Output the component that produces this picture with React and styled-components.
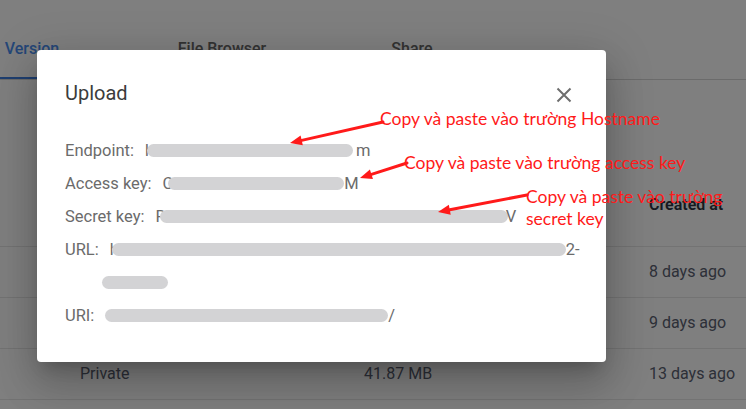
import React from 'react'
import styled, { createGlobalStyle } from 'styled-components'

const GlobalStyle = createGlobalStyle`
    html, body {
        margin: 0;
        padding: 0;
        background: #ffffff;
        font-family: Roboto, "Liberation Sans", sans-serif;
    }
    #root {
        position: relative;
        width: 746px;
        height: 409px;
        overflow: hidden;
    }
`

const Page = styled.div`
    width: 746px;
    height: 409px;
    background: #ffffff;
`

const TabBar = styled.div`
    display: flex;
    margin-left: -63px;
    padding-top: 38px;
    border-bottom: 1px solid #d6d6d6;
`

const Tab = styled.div`
    width: 190px;
    text-align: center;
    font-size: 16px;
    font-weight: 500;
    line-height: 22px;
    padding-bottom: 17px;
    color: ${props => props.active ? '#4a8ef0' : '#666666'};
    border-bottom: 2px solid ${props => props.active ? '#3f7fe0' : 'transparent'};
`

const Table = styled.div`
    margin-top: 114px;
`

const TableRow = styled.div`
    display: grid;
    grid-template-columns: 284px 285px auto;
    padding-left: 80px;
    height: ${props => props.header ? '52px' : '50px'};
    align-items: ${props => props.header ? 'start' : 'center'};
    border-bottom: 1px solid #e6e6e6;
    font-size: 16px;
    line-height: 22px;
    color: ${props => props.header ? '#2c3240' : '#5a6070'};
    font-weight: ${props => props.header ? 600 : 400};
`

const Backdrop = styled.div`
    position: absolute;
    inset: 0;
    background: rgba(0, 0, 0, 0.5);
`

const Dialog = styled.div`
    position: absolute;
    left: 37px;
    top: 50px;
    width: 569px;
    height: 312px;
    box-sizing: border-box;
    background: #ffffff;
    border-radius: 4px;
    padding: 31px 34px 0 28px;
    box-shadow: 0 11px 15px -7px rgba(0,0,0,0.2), 0 24px 38px 3px rgba(0,0,0,0.14), 0 9px 46px 8px rgba(0,0,0,0.12);
`

const DialogHeader = styled.div`
    display: flex;
    align-items: center;
    justify-content: space-between;
    height: 24px;
`

const Title = styled.h2`
    margin: 0;
    font-size: 20px;
    font-weight: 400;
    color: #3c3c3c;
    line-height: 24px;
`

const CloseButton = styled.div`
    width: 16px;
    height: 16px;
    margin-top: 4px;
    display: flex;
`

const Fields = styled.div`
    margin-top: 29px;
    font-size: 16.5px;
    line-height: 33px;
    color: #6b6b6b;
`

const Field = styled.div`
    display: flex;
`

const Label = styled.span`
    flex: none;
    margin-right: 11px;
`

const Value = styled.div`
    flex: 1;
    white-space: nowrap;
`

// blurred out part of a secret value
const Redact = styled.span`
    display: inline-block;
    vertical-align: middle;
    height: 13px;
    margin-top: -3px;
    margin-left: ${props => props.overlap || 0}px;
    margin-right: ${props => props.gap || 0}px;
    border-radius: 7px;
    background: #d3d3d5;
`

const Arrows = styled.svg`
    position: absolute;
    left: 0;
    top: 0;
    pointer-events: none;
`

const Note = styled.div`
    position: absolute;
    font-family: Lato, "Noto Sans", sans-serif;
    font-size: 17.5px;
    line-height: 22px;
    color: #ff1a1a;
    white-space: nowrap;
`

const fields = [
    { label: 'Endpoint:', head: 'h', width: 206, tail: 'm', overlap: -7, gap: 3 },
    { label: 'Access key:', head: 'C', width: 176, tail: 'M', overlap: -5, gap: 0 },
    { label: 'Secret key:', head: 'R', width: 348, tail: 'V', overlap: -6, gap: -2 },
    { label: 'URL:', head: 'h', width: 454, tail: '2-', overlap: -7, gap: 0, more: 66 },
    { label: 'URI:', head: '', width: 283, tail: '/', overlap: 0, gap: 0 },
]

const notes = [
    { left: 380, top: 108, text: 'Copy và paste vào trường Hostname' },
    { left: 404, top: 152, text: 'Copy và paste vào trường access key' },
    { left: 526, top: 186, text: 'Copy và paste vào trường' },
    { left: 526, top: 208, text: 'secret key' },
]

const arrows = [
    { x1: 383, y1: 122, x2: 290, y2: 143 },
    { x1: 407, y1: 163, x2: 360, y2: 178 },
    { x1: 527, y1: 195, x2: 438, y2: 212 },
]

function Arrow({ x1, y1, x2, y2 }) {
    const a = Math.atan2(y2 - y1, x2 - x1)
    const len = 12
    const w = 5
    const bx = x2 - len * Math.cos(a)
    const by = y2 - len * Math.sin(a)
    const px = -Math.sin(a) * w
    const py = Math.cos(a) * w
    return (
        <g>
            <line x1={x1} y1={y1} x2={bx} y2={by} stroke="#ff1a1a" strokeWidth="3" strokeLinecap="round" />
            <polygon points={`${x2},${y2} ${bx + px},${by + py} ${bx - px},${by - py}`} fill="#ff1a1a" />
        </g>
    )
}

export default function App() {
    return (
        <>
            <GlobalStyle />
            <Page>
                <TabBar>
                    <Tab active>Version</Tab>
                    <Tab>File Browser</Tab>
                    <Tab>Share</Tab>
                </TabBar>

                <Table>
                    <TableRow header>
                        <span>Access</span>
                        <span>Size</span>
                        <span>Created at</span>
                    </TableRow>
                    <TableRow>
                        <span>Private</span>
                        <span>12.40 MB</span>
                        <span>8 days ago</span>
                    </TableRow>
                    <TableRow>
                        <span>Private</span>
                        <span>23.05 MB</span>
                        <span>9 days ago</span>
                    </TableRow>
                    <TableRow>
                        <span>Private</span>
                        <span>41.87 MB</span>
                        <span>13 days ago</span>
                    </TableRow>
                </Table>
            </Page>

            <Backdrop />

            <Dialog>
                <DialogHeader>
                    <Title>Upload</Title>
                    <CloseButton>
                        <svg width="16" height="16" viewBox="0 0 16 16">
                            <path d="M1.5 1.5 L14.5 14.5 M14.5 1.5 L1.5 14.5" stroke="#6e6e6e" strokeWidth="2" fill="none" />
                        </svg>
                    </CloseButton>
                </DialogHeader>

                <Fields>
                    {fields.map(f => (
                        <Field key={f.label}>
                            <Label>{f.label}</Label>
                            <Value>
                                {f.head}
                                <Redact overlap={f.overlap} gap={f.gap} style={{ width: f.width }} />
                                {f.tail}
                                {f.more && (
                                    <>
                                        <br />
                                        <Redact overlap={-8} style={{ width: f.more }} />
                                    </>
                                )}
                            </Value>
                        </Field>
                    ))}
                </Fields>
            </Dialog>

            {/* red hints drawn over the screenshot */}
            <Arrows width="746" height="409">
                {arrows.map((a, i) => <Arrow key={i} {...a} />)}
            </Arrows>
            {notes.map(n => (
                <Note key={n.text} style={{ left: n.left, top: n.top }}>{n.text}</Note>
            ))}
        </>
    )
}
